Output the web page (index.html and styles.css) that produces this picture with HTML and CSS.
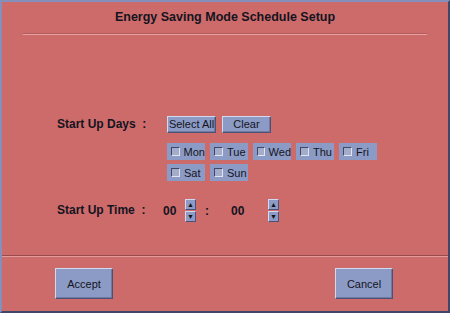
FILE: index.html
```html
<!DOCTYPE html>
<html lang="en">
<head>
  <meta charset="UTF-8">
  <title>Energy Saving Mode Schedule Setup</title>
  <link rel="stylesheet" href="styles.css">
</head>
<body>
  <div class="frame">
    <div class="title">Energy Saving Mode Schedule Setup</div>
    <div class="rule"></div>

    <div class="main">
      <div class="row days-row">
        <div class="label">Start Up Days &nbsp;:</div>
        <div class="controls">
          <div class="btn-line">
            <button class="btn small">Select All</button>
            <button class="btn small">Clear</button>
          </div>
          <div class="days">
            <label class="day"><span class="box"></span>Mon</label>
            <label class="day"><span class="box"></span>Tue</label>
            <label class="day"><span class="box"></span>Wed</label>
            <label class="day"><span class="box"></span>Thu</label>
            <label class="day"><span class="box"></span>Fri</label>
            <label class="day"><span class="box"></span>Sat</label>
            <label class="day"><span class="box"></span>Sun</label>
          </div>
        </div>
      </div>

      <div class="row time-row">
        <div class="label time-label">Start Up Time &nbsp;:</div>
        <span class="num">00</span>
        <div class="spin">
          <span class="arrow">&#9650;</span>
          <span class="arrow">&#9660;</span>
        </div>
        <span class="colon">:</span>
        <span class="num min">00</span>
        <div class="spin">
          <span class="arrow">&#9650;</span>
          <span class="arrow">&#9660;</span>
        </div>
      </div>
    </div>

    <div class="footer">
      <button class="btn big">Accept</button>
      <button class="btn big">Cancel</button>
    </div>
  </div>
</body>
</html>
```

FILE: styles.css
```css
:root {
  --bg: #cd6b6b;
  --btn: #8c9bc6;
  --btn-light: #d3daf0;
  --btn-dark: #4b5275;
  --ink: #141420;
}
html, body {
  margin: 0;
  padding: 0;
  background: var(--bg);
}
body {
  font-family: 'Liberation Sans', Arial, sans-serif;
  color: var(--ink);
}

.frame {
  width: 450px;
  height: 313px;
  box-sizing: border-box;
  border: 2px solid #8490bb;
  border-right-color: #3f4668;
  border-bottom-color: #3f4668;
  background: var(--bg);
  display: flex;
  flex-direction: column;
}

.title {
  height: 31px;
  line-height: 31px;
  text-align: center;
  font-size: 12.5px;
  font-weight: 700;
}
.rule {
  margin: 0 21px;
  border-top: 1px solid #b55a5a;
  border-bottom: 1px solid #e7a3a3;
}

.main {
  flex: 1;
  padding: 81px 0 0 55px;
}
.row {
  display: flex;
  align-items: flex-start;
}
.label {
  width: 110px;
  font-size: 12px;
  font-weight: 700;
  line-height: 17px;
}

.btn {
  font-family: 'Liberation Sans', Arial, sans-serif;
  background: var(--btn);
  color: var(--ink);
  border: 1px solid;
  border-color: var(--btn-light) var(--btn-dark) var(--btn-dark) var(--btn-light);
  box-shadow: inset -1px -1px 0 #6f7aa3;
  padding: 0;
  margin: 0;
  cursor: pointer;
}
.btn-line {
  display: flex;
  gap: 6px;
}
.btn.small {
  width: 49px;
  height: 17px;
  font-size: 11px;
  line-height: 15px;
}

.days {
  display: grid;
  grid-template-columns: repeat(5, 38px);
  column-gap: 5px;
  row-gap: 4px;
  margin-top: 10px;
}
.day {
  height: 17px;
  background: var(--btn);
  display: flex;
  align-items: center;
  gap: 4px;
  padding-left: 4px;
  font-size: 11px;
  box-sizing: border-box;
}
.box {
  width: 7px;
  height: 7px;
  background: #a3acc8;
  border: 1px solid;
  border-color: #3f4668 #e0e4f2 #e0e4f2 #3f4668;
}

.time-row {
  margin-top: 18px;
  align-items: center;
}
.time-label {
  width: 106px;
}
.num {
  font-size: 12px;
  font-weight: 700;
  width: 22px;
}
.num.min {
  width: 37px;
}
.colon {
  font-size: 12px;
  font-weight: 700;
  width: 35px;
  padding-left: 9px;
  box-sizing: border-box;
}
.spin {
  display: flex;
  flex-direction: column;
  gap: 1px;
}
.arrow {
  width: 11px;
  height: 11px;
  box-sizing: border-box;
  background: var(--btn);
  border: 1px solid;
  border-color: var(--btn-light) var(--btn-dark) var(--btn-dark) var(--btn-light);
  font-size: 7px;
  line-height: 9px;
  text-align: center;
  color: #111;
}

.footer {
  border-top: 1px solid #9a4c4c;
  box-shadow: inset 0 1px 0 #e39c9c;
  padding: 12px 55px 0 53px;
  height: 43px;
  display: flex;
  justify-content: space-between;
  align-items: flex-start;
}
.btn.big {
  width: 58px;
  height: 31px;
  font-size: 11px;
}
```
